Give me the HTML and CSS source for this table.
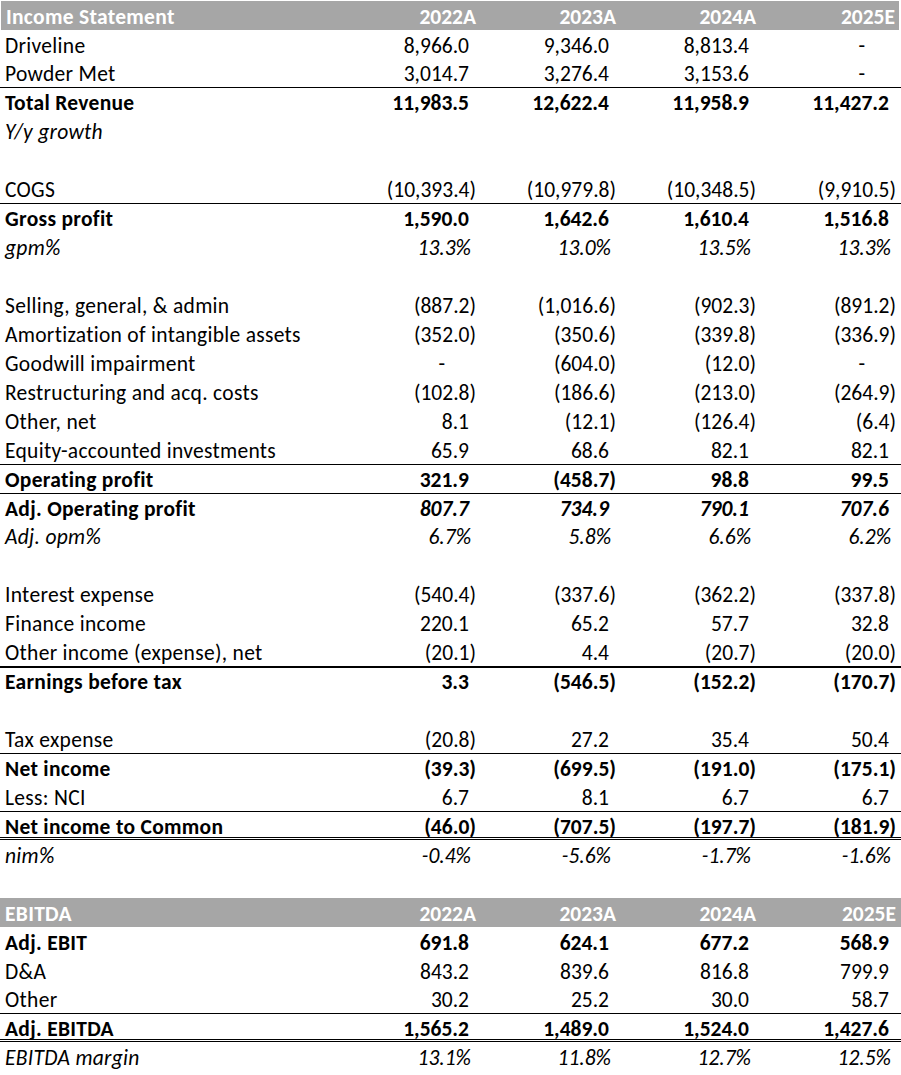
FILE: index.html
```html
<!DOCTYPE html>
<html>
<head>
<meta charset="utf-8">
<link rel="stylesheet" href="styles.css">
</head>
<body>
<div class="sheet">
  <div class="row head first"><div class="lbl">Income Statement</div><div>2022A</div><div>2023A</div><div>2024A</div><div>2025E</div></div>
  <div class="row"><div class="lbl">Driveline</div><div><span class="p">8,966.0</span></div><div><span class="p">9,346.0</span></div><div><span class="p">8,813.4</span></div><div><span class="d">-</span></div></div>
  <div class="row"><div class="lbl">Powder Met</div><div><span class="p">3,014.7</span></div><div><span class="p">3,276.4</span></div><div><span class="p">3,153.6</span></div><div><span class="d">-</span></div></div>
  <div class="row b top"><div class="lbl">Total Revenue</div><div><span class="p">11,983.5</span></div><div><span class="p">12,622.4</span></div><div><span class="p">11,958.9</span></div><div><span class="p">11,427.2</span></div></div>
  <div class="row i"><div class="lbl">Y/y growth</div><div></div><div></div><div></div><div></div></div>
  <div class="row"><div class="lbl"></div><div></div><div></div><div></div><div></div></div>
  <div class="row"><div class="lbl">COGS</div><div>(10,393.4)</div><div>(10,979.8)</div><div>(10,348.5)</div><div>(9,910.5)</div></div>
  <div class="row b top"><div class="lbl">Gross profit</div><div><span class="p">1,590.0</span></div><div><span class="p">1,642.6</span></div><div><span class="p">1,610.4</span></div><div><span class="p">1,516.8</span></div></div>
  <div class="row i"><div class="lbl">gpm%</div><div><span class="pc">13.3%</span></div><div><span class="pc">13.0%</span></div><div><span class="pc">13.5%</span></div><div><span class="pc">13.3%</span></div></div>
  <div class="row"><div class="lbl"></div><div></div><div></div><div></div><div></div></div>
  <div class="row"><div class="lbl">Selling, general, &amp; admin</div><div>(887.2)</div><div>(1,016.6)</div><div>(902.3)</div><div>(891.2)</div></div>
  <div class="row"><div class="lbl">Amortization of intangible assets</div><div>(352.0)</div><div>(350.6)</div><div>(339.8)</div><div>(336.9)</div></div>
  <div class="row"><div class="lbl">Goodwill impairment</div><div><span class="d">-</span></div><div>(604.0)</div><div>(12.0)</div><div><span class="d">-</span></div></div>
  <div class="row"><div class="lbl">Restructuring and acq. costs</div><div>(102.8)</div><div>(186.6)</div><div>(213.0)</div><div>(264.9)</div></div>
  <div class="row"><div class="lbl">Other, net</div><div><span class="p">8.1</span></div><div>(12.1)</div><div>(126.4)</div><div>(6.4)</div></div>
  <div class="row"><div class="lbl">Equity-accounted investments</div><div><span class="p">65.9</span></div><div><span class="p">68.6</span></div><div><span class="p">82.1</span></div><div><span class="p">82.1</span></div></div>
  <div class="row b top"><div class="lbl">Operating profit</div><div><span class="p">321.9</span></div><div>(458.7)</div><div><span class="p">98.8</span></div><div><span class="p">99.5</span></div></div>
  <div class="row b top vi"><div class="lbl">Adj. Operating profit</div><div><span class="p">807.7</span></div><div><span class="p">734.9</span></div><div><span class="p">790.1</span></div><div><span class="p">707.6</span></div></div>
  <div class="row i"><div class="lbl">Adj. opm%</div><div><span class="pc">6.7%</span></div><div><span class="pc">5.8%</span></div><div><span class="pc">6.6%</span></div><div><span class="pc">6.2%</span></div></div>
  <div class="row"><div class="lbl"></div><div></div><div></div><div></div><div></div></div>
  <div class="row"><div class="lbl">Interest expense</div><div>(540.4)</div><div>(337.6)</div><div>(362.2)</div><div>(337.8)</div></div>
  <div class="row"><div class="lbl">Finance income</div><div><span class="p">220.1</span></div><div><span class="p">65.2</span></div><div><span class="p">57.7</span></div><div><span class="p">32.8</span></div></div>
  <div class="row"><div class="lbl">Other income (expense), net</div><div>(20.1)</div><div><span class="p">4.4</span></div><div>(20.7)</div><div>(20.0)</div></div>
  <div class="row b top2"><div class="lbl">Earnings before tax</div><div><span class="p">3.3</span></div><div>(546.5)</div><div>(152.2)</div><div>(170.7)</div></div>
  <div class="row"><div class="lbl"></div><div></div><div></div><div></div><div></div></div>
  <div class="row"><div class="lbl">Tax expense</div><div>(20.8)</div><div><span class="p">27.2</span></div><div><span class="p">35.4</span></div><div><span class="p">50.4</span></div></div>
  <div class="row b top"><div class="lbl">Net income</div><div>(39.3)</div><div>(699.5)</div><div>(191.0)</div><div>(175.1)</div></div>
  <div class="row"><div class="lbl">Less: NCI</div><div><span class="p">6.7</span></div><div><span class="p">8.1</span></div><div><span class="p">6.7</span></div><div><span class="p">6.7</span></div></div>
  <div class="row b top dbl"><div class="lbl">Net income to Common</div><div>(46.0)</div><div>(707.5)</div><div>(197.7)</div><div>(181.9)</div></div>
  <div class="row i"><div class="lbl">nim%</div><div><span class="pc">-0.4%</span></div><div><span class="pc">-5.6%</span></div><div><span class="pc">-1.7%</span></div><div><span class="pc">-1.6%</span></div></div>
  <div class="row"><div class="lbl"></div><div></div><div></div><div></div><div></div></div>
  <div class="row head"><div class="lbl">EBITDA</div><div>2022A</div><div>2023A</div><div>2024A</div><div>2025E</div></div>
  <div class="row b"><div class="lbl">Adj. EBIT</div><div><span class="p">691.8</span></div><div><span class="p">624.1</span></div><div><span class="p">677.2</span></div><div><span class="p">568.9</span></div></div>
  <div class="row"><div class="lbl">D&amp;A</div><div><span class="p">843.2</span></div><div><span class="p">839.6</span></div><div><span class="p">816.8</span></div><div><span class="p">799.9</span></div></div>
  <div class="row"><div class="lbl">Other</div><div><span class="p">30.2</span></div><div><span class="p">25.2</span></div><div><span class="p">30.0</span></div><div><span class="p">58.7</span></div></div>
  <div class="row b top dbl"><div class="lbl">Adj. EBITDA</div><div><span class="p">1,565.2</span></div><div><span class="p">1,489.0</span></div><div><span class="p">1,524.0</span></div><div><span class="p">1,427.6</span></div></div>
  <div class="row i"><div class="lbl">EBITDA margin</div><div><span class="pc">13.1%</span></div><div><span class="pc">11.8%</span></div><div><span class="pc">12.7%</span></div><div><span class="pc">12.5%</span></div></div>
</div>
</body>
</html>
```

FILE: styles.css
```css
html, body {
  margin: 0;
  padding: 0;
  background: #ffffff;
}
.sheet {
  width: 901px;
  padding-top: 1px;
  font-family: Calibri, Carlito, Lato, "Liberation Sans", sans-serif;
  font-size: 21.5px;
  color: #000;
}
.row {
  display: grid;
  grid-template-columns: 341px 140px 140px 140px 140px;
  height: 28.95px;
  box-sizing: border-box;
  align-items: start;
  line-height: 18px;
  padding-top: 7px;
  white-space: nowrap;
}
.row > div {
  text-align: right;
  padding-right: 5px;
}
.row > .lbl {
  text-align: left;
  padding-left: 5px;
  padding-right: 0;
  letter-spacing: 0.3px;
}
.row.first {
  height: 28.5px;
  margin-left: 1px;
  margin-right: 2px;
  grid-template-columns: 340px 140px 140px 140px 138px;
}
.row.first > div:last-child {
  padding-right: 4px;
}
.head {
  background: #a6a6a6;
  color: #ffffff;
  font-weight: bold;
}
.b { font-weight: bold; }
.i { font-style: italic; }
.vi > div:not(.lbl) { font-style: italic; }
.top { border-top: 1px solid #000; padding-top: 6px; }
.top2 { border-top: 2px solid #000; padding-top: 5px; }
.p { padding-right: 7px; }
.d { padding-right: 31px; }
.pc { padding-right: 5px; }
.dbl { border-bottom: 3px double #000; }
```
